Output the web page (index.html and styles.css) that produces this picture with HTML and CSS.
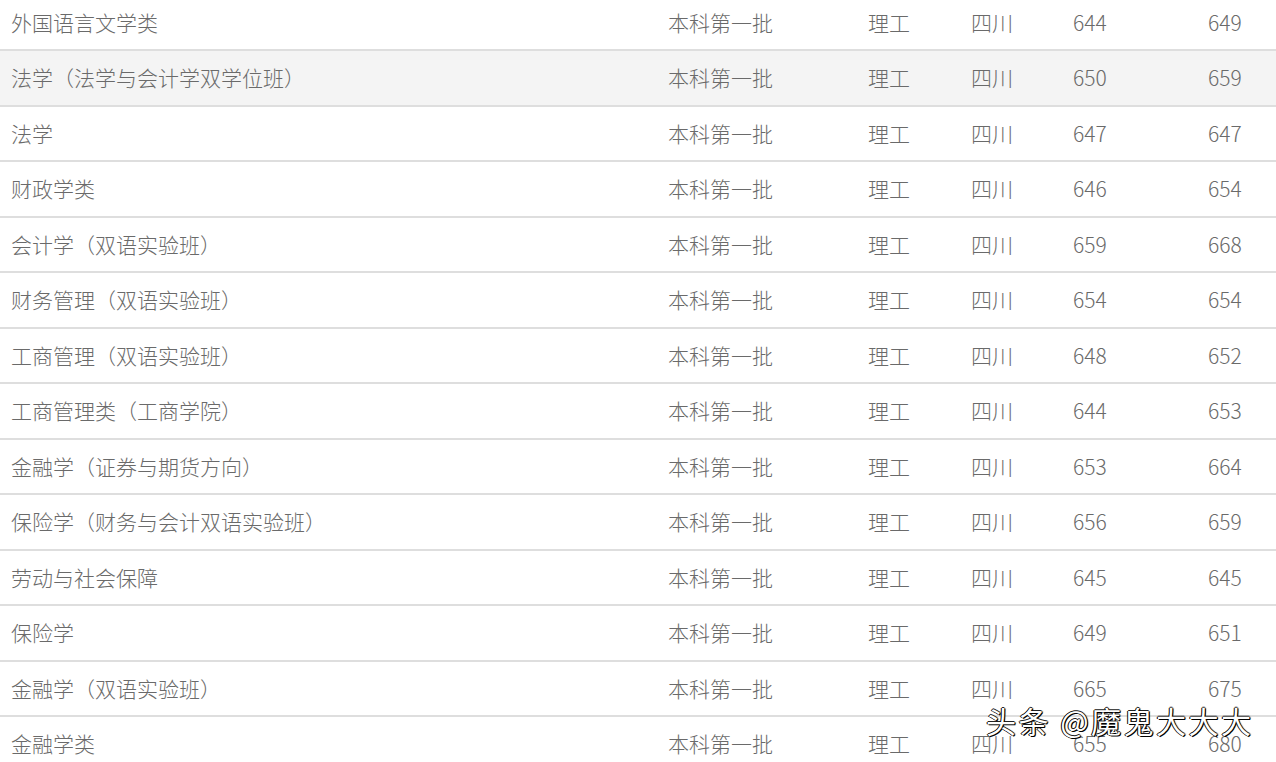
FILE: index.html
```html
<!DOCTYPE html>
<html lang="zh-CN">
<head>
<meta charset="utf-8">
<title>录取分数</title>
<link rel="stylesheet" href="styles.css">
</head>
<body>
<div class="table">
  <div class="row"><div class="c">外国语言文学类</div><div class="c">本科第一批</div><div class="c">理工</div><div class="c">四川</div><div class="c">644</div><div class="c">649</div></div>
  <div class="row alt"><div class="c">法学（法学与会计学双学位班）</div><div class="c">本科第一批</div><div class="c">理工</div><div class="c">四川</div><div class="c">650</div><div class="c">659</div></div>
  <div class="row"><div class="c">法学</div><div class="c">本科第一批</div><div class="c">理工</div><div class="c">四川</div><div class="c">647</div><div class="c">647</div></div>
  <div class="row"><div class="c">财政学类</div><div class="c">本科第一批</div><div class="c">理工</div><div class="c">四川</div><div class="c">646</div><div class="c">654</div></div>
  <div class="row"><div class="c">会计学（双语实验班）</div><div class="c">本科第一批</div><div class="c">理工</div><div class="c">四川</div><div class="c">659</div><div class="c">668</div></div>
  <div class="row"><div class="c">财务管理（双语实验班）</div><div class="c">本科第一批</div><div class="c">理工</div><div class="c">四川</div><div class="c">654</div><div class="c">654</div></div>
  <div class="row"><div class="c">工商管理（双语实验班）</div><div class="c">本科第一批</div><div class="c">理工</div><div class="c">四川</div><div class="c">648</div><div class="c">652</div></div>
  <div class="row"><div class="c">工商管理类（工商学院）</div><div class="c">本科第一批</div><div class="c">理工</div><div class="c">四川</div><div class="c">644</div><div class="c">653</div></div>
  <div class="row"><div class="c">金融学（证券与期货方向）</div><div class="c">本科第一批</div><div class="c">理工</div><div class="c">四川</div><div class="c">653</div><div class="c">664</div></div>
  <div class="row"><div class="c">保险学（财务与会计双语实验班）</div><div class="c">本科第一批</div><div class="c">理工</div><div class="c">四川</div><div class="c">656</div><div class="c">659</div></div>
  <div class="row"><div class="c">劳动与社会保障</div><div class="c">本科第一批</div><div class="c">理工</div><div class="c">四川</div><div class="c">645</div><div class="c">645</div></div>
  <div class="row"><div class="c">保险学</div><div class="c">本科第一批</div><div class="c">理工</div><div class="c">四川</div><div class="c">649</div><div class="c">651</div></div>
  <div class="row"><div class="c">金融学（双语实验班）</div><div class="c">本科第一批</div><div class="c">理工</div><div class="c">四川</div><div class="c">665</div><div class="c">675</div></div>
  <div class="row"><div class="c">金融学类</div><div class="c">本科第一批</div><div class="c">理工</div><div class="c">四川</div><div class="c">655</div><div class="c">680</div></div>
</div>
<div class="watermark">头条 @魔鬼大大大</div>
</body>
</html>
```
FILE: styles.css
```css
html, body {
  margin: 0;
  padding: 0;
  background: #fff;
  overflow: hidden;
}
body {
  width: 1276px;
  height: 762px;
  position: relative;
  font-family: "Noto Sans CJK SC", "Noto Sans", sans-serif;
  font-weight: 300;
  color: #6a6a6a;
  font-size: 21px;
}
.table {
  margin-top: -4.5px;
}
.row {
  display: grid;
  grid-template-columns: 657px 200px 103px 102px 135px 1fr;
  height: 53.5px;
  border-bottom: 2px solid #dedede;
  align-items: center;
}
.row.alt {
  background: #f4f4f4;
}
.c {
  padding-left: 11px;
  white-space: nowrap;
  line-height: 1;
}
.watermark {
  position: absolute;
  left: 986px;
  top: 703px;
  font-size: 30px;
  font-weight: 400;
  line-height: 34px;
  color: #fff;
  letter-spacing: 2.5px;
  text-shadow: 1px 1px 0 #000, -1px 0 0 #000, 0 -1px 0 #222, 1px 0 1px #000;
  white-space: nowrap;
}
```
